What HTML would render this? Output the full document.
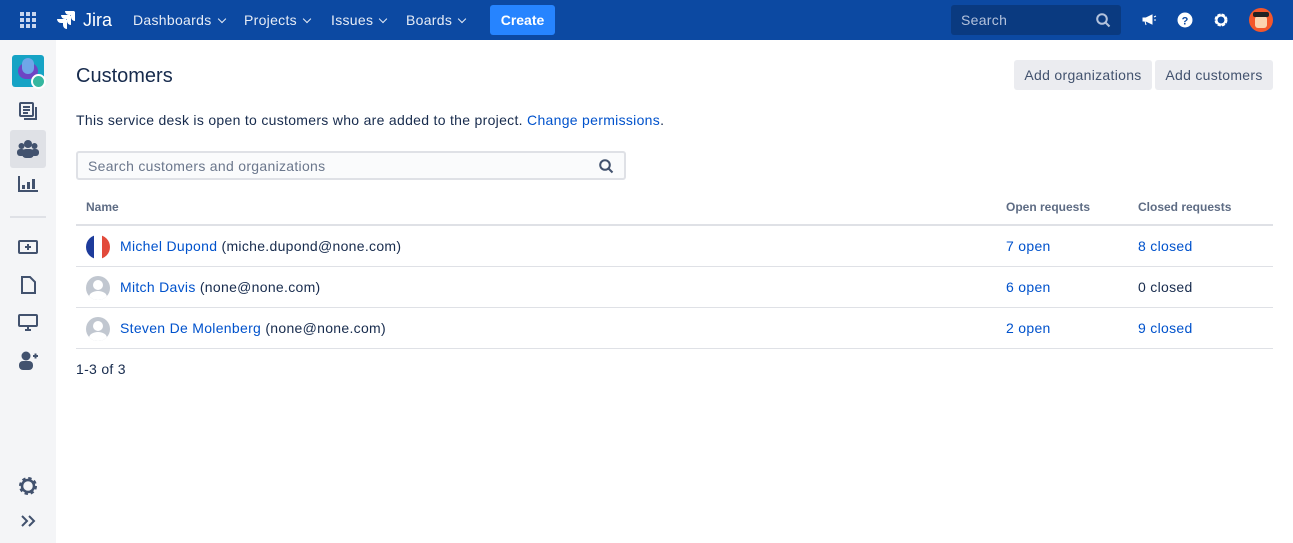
<!DOCTYPE html>
<html><head><style>
*{box-sizing:border-box;margin:0;padding:0}
body{width:1293px;height:543px;overflow:hidden;font-family:"Liberation Sans",sans-serif;background:#fff;position:relative;color:#172b4d}
.nav{position:absolute;left:0;top:0;width:1293px;height:40px;background:#0c49a2;color:#fff}
.nav .it{position:absolute;top:12px;font-size:14px;color:#e6ecf6}
.chev{display:inline-block;width:6px;height:6px;border-right:1.6px solid #e6ecf6;border-bottom:1.6px solid #e6ecf6;transform:rotate(45deg);margin-left:7px;position:relative;top:-3px}
.side{position:absolute;left:0;top:40px;width:56px;height:503px;background:#f4f5f7}
a{color:#0052cc;text-decoration:none}
.ls{letter-spacing:0.3px}
.btn{position:absolute;top:60px;height:30px;background:#ebecf0;border-radius:3px;font-size:14px;color:#42526e;line-height:30px;text-align:center}
.row{position:absolute;left:76px;width:1197px;height:41px;border-bottom:1px solid #dfe1e6;font-size:14px;letter-spacing:0.3px}
.row span{position:absolute;top:12px}
.av{position:absolute;left:10px;top:9px;width:24px;height:24px;border-radius:50%;background:#c1c7d0;overflow:hidden}
</style></head><body>
<div class="nav">
<svg style="position:absolute;left:20px;top:12px" width="16" height="16"><g fill="#c9d6ee"><rect x="0" y="0" width="4" height="4"/><rect x="6" y="0" width="4" height="4"/><rect x="12" y="0" width="4" height="4"/><rect x="0" y="6" width="4" height="4"/><rect x="6" y="6" width="4" height="4"/><rect x="12" y="6" width="4" height="4"/><rect x="0" y="12" width="4" height="4"/><rect x="6" y="12" width="4" height="4"/><rect x="12" y="12" width="4" height="4"/></g></svg>
<svg style="position:absolute;left:56px;top:10px" width="20" height="20"><path d="M18 1H9a4 4 0 0 0 4 4h2v2a4 4 0 0 0 4 4V2z M14 5H5a4 4 0 0 0 4 4h2v2a4 4 0 0 0 4 4V6z M10 9H1a4 4 0 0 0 4 4h2v2a4 4 0 0 0 4 4v-9z" fill="#fff"/></svg>
<span class="it" style="left:83px;top:10px;font-size:18px;color:#fff">Jira</span>
<span class="it ls" style="left:133px">Dashboards<i class="chev"></i></span>
<span class="it ls" style="left:244px">Projects<i class="chev"></i></span>
<span class="it ls" style="left:331px">Issues<i class="chev"></i></span>
<span class="it ls" style="left:406px">Boards<i class="chev"></i></span>
<div style="position:absolute;left:490px;top:5px;width:65px;height:30px;background:#2684ff;border-radius:3px;font-size:14px;line-height:30px;text-align:center;color:#fff;font-weight:bold">Create</div>
<div style="position:absolute;left:951px;top:5px;width:170px;height:30px;background:#0a3a80;border-radius:3px;font-size:14px;line-height:30px;padding-left:10px;color:#b3c2dc" class="ls">Search
<svg style="position:absolute;right:10px;top:8px" width="15" height="15"><circle cx="6" cy="6" r="4.8" stroke="#b3c2dc" stroke-width="2" fill="none"/><path d="M9.5 9.5l4 4" stroke="#b3c2dc" stroke-width="2"/></svg></div>
<svg style="position:absolute;left:1141px;top:12px" width="16" height="16"><path d="M2 6h3l6-3v9l-6-3H2z M4 9l1 4" fill="#fff" stroke="#fff"/><path d="M13 5l2-1 M13 8h2" stroke="#fff"/></svg>
<svg style="position:absolute;left:1177px;top:12px" width="16" height="16"><circle cx="8" cy="8" r="7.5" fill="#fff"/><text x="8" y="12.5" font-size="11" font-weight="bold" text-anchor="middle" fill="#0c49a2" font-family="Liberation Sans">?</text></svg>
<svg style="position:absolute;left:1213px;top:12px" width="16" height="16"><circle cx="8" cy="8" r="5" stroke="#fff" stroke-width="3" fill="none" stroke-dasharray="3 1"/><circle cx="8" cy="8" r="4.5" stroke="#fff" stroke-width="2" fill="none"/></svg>
<div style="position:absolute;left:1249px;top:8px;width:24px;height:24px;border-radius:50%;background:#f4572b"><div style="position:absolute;left:6px;top:8px;width:12px;height:12px;background:#fbd4b0;border-radius:3px"></div><div style="position:absolute;left:4px;top:4px;width:16px;height:5px;background:#222;border-radius:2px"></div></div>
</div>
<div class="side">
<div style="position:absolute;left:12px;top:15px;width:32px;height:32px;background:#16a3c5;border-radius:3px"><div style="position:absolute;left:6px;top:8px;width:20px;height:16px;background:#6e45c4;border-radius:8px"></div><div style="position:absolute;left:10px;top:3px;width:12px;height:16px;background:#6fa6e8;border-radius:6px"></div><div style="position:absolute;left:19px;top:19px;width:15px;height:15px;background:#36b7a0;border-radius:50%;border:2px solid #fff"></div></div>
<svg style="position:absolute;left:19px;top:62px" width="18" height="18" fill="none" stroke="#42526e" stroke-width="2"><rect x="1" y="1" width="13" height="13" rx="1"/><path d="M4 5h7M4 8h7M4 11h5M17 5v12H5"/></svg>
<div style="position:absolute;left:10px;top:90px;width:36px;height:38px;background:#dfe1e6;border-radius:3px"></div>
<svg style="position:absolute;left:17px;top:99px" width="22" height="20" fill="#42526e"><circle cx="11" cy="5" r="4"/><circle cx="4.5" cy="7" r="3"/><circle cx="17.5" cy="7" r="3"/><rect x="5" y="10" width="12" height="9" rx="4"/><rect x="0" y="10" width="8" height="7" rx="3"/><rect x="14" y="10" width="8" height="7" rx="3"/></svg>
<svg style="position:absolute;left:18px;top:136px" width="20" height="16" fill="#42526e"><rect x="0" y="0" width="2" height="16"/><rect x="0" y="14" width="20" height="2"/><rect x="4" y="9" width="3" height="4"/><rect x="9" y="6" width="3" height="7"/><rect x="14" y="3" width="3" height="10"/></svg>
<div style="position:absolute;left:10px;top:176px;width:36px;height:2px;background:#dfe1e6"></div>
<svg style="position:absolute;left:18px;top:199px" width="20" height="16" fill="none" stroke="#42526e" stroke-width="2"><rect x="1" y="2" width="18" height="12" rx="1"/><path d="M10 5v6M7 8h6"/></svg>
<svg style="position:absolute;left:20px;top:236px" width="16" height="18" fill="none" stroke="#42526e" stroke-width="2"><path d="M2 1h8l5 5v11H2z"/></svg>
<svg style="position:absolute;left:18px;top:274px" width="20" height="18" fill="none" stroke="#42526e" stroke-width="2"><rect x="1" y="1" width="18" height="11" rx="1"/><path d="M7 16h6M10 12v4"/></svg>
<svg style="position:absolute;left:18px;top:311px" width="20" height="20" fill="#42526e"><circle cx="8" cy="5" r="4.5"/><rect x="1" y="10" width="14" height="9" rx="4"/><path d="M15 5h5M17.5 2.5v5" stroke="#42526e" stroke-width="2"/></svg>
<svg style="position:absolute;left:18px;top:436px" width="20" height="20" fill="none" stroke="#42526e"><circle cx="10" cy="10" r="7" stroke-width="4" stroke-dasharray="3 2.5"/><circle cx="10" cy="10" r="6" stroke-width="2.5"/></svg>
<svg style="position:absolute;left:20px;top:474px" width="16" height="14" fill="none" stroke="#42526e" stroke-width="2"><path d="M2 2l5 5-5 5M9 2l5 5-5 5"/></svg>
</div>
<div style="position:absolute;left:76px;top:65px;font-size:20px;color:#172b4d">Customers</div>
<div class="btn ls" style="left:1014px;width:138px">Add organizations</div>
<div class="btn ls" style="left:1155px;width:118px">Add customers</div>
<div class="ls" style="position:absolute;left:76px;top:112px;font-size:14px">This service desk is open to customers who are added to the project. <a>Change permissions</a>.</div>
<div class="ls" style="position:absolute;left:76px;top:151px;width:550px;height:29px;border:2px solid #dfe1e6;border-radius:3px;background:#fafbfc;font-size:14px;color:#6b778c;padding:5px 10px">Search customers and organizations
<svg style="position:absolute;right:10px;top:6px" width="15" height="15"><circle cx="6" cy="6" r="4.8" stroke="#42526e" stroke-width="2" fill="none"/><path d="M9.5 9.5l4 4" stroke="#42526e" stroke-width="2"/></svg></div>
<div style="position:absolute;left:76px;top:200px;width:1197px;height:26px;border-bottom:2px solid #dfe1e6;font-size:12px;font-weight:bold;color:#5e6c84">
<span style="position:absolute;left:10px">Name</span><span style="position:absolute;left:930px">Open requests</span><span style="position:absolute;left:1062px">Closed requests</span></div>
<div class="row" style="top:226px"><div class="av" style="background:linear-gradient(90deg,#1d3b9b 0 33%,#fff 33% 66%,#e24a3b 66%)"></div><span style="left:44px"><a>Michel Dupond</a> (miche.dupond@none.com)</span><span style="left:930px"><a>7 open</a></span><span style="left:1062px"><a>8 closed</a></span></div>
<div class="row" style="top:267px"><div class="av"><div style="position:absolute;left:7px;top:4px;width:10px;height:10px;border-radius:50%;background:#fff"></div><div style="position:absolute;left:3px;top:15px;width:18px;height:12px;border-radius:50%;background:#fff"></div></div><span style="left:44px"><a>Mitch Davis</a> (none@none.com)</span><span style="left:930px"><a>6 open</a></span><span style="left:1062px">0 closed</span></div>
<div class="row" style="top:308px"><div class="av"><div style="position:absolute;left:7px;top:4px;width:10px;height:10px;border-radius:50%;background:#fff"></div><div style="position:absolute;left:3px;top:15px;width:18px;height:12px;border-radius:50%;background:#fff"></div></div><span style="left:44px"><a>Steven De Molenberg</a> (none@none.com)</span><span style="left:930px"><a>2 open</a></span><span style="left:1062px"><a>9 closed</a></span></div>
<div class="ls" style="position:absolute;left:76px;top:361px;font-size:14px">1-3 of 3</div>
</body></html>
